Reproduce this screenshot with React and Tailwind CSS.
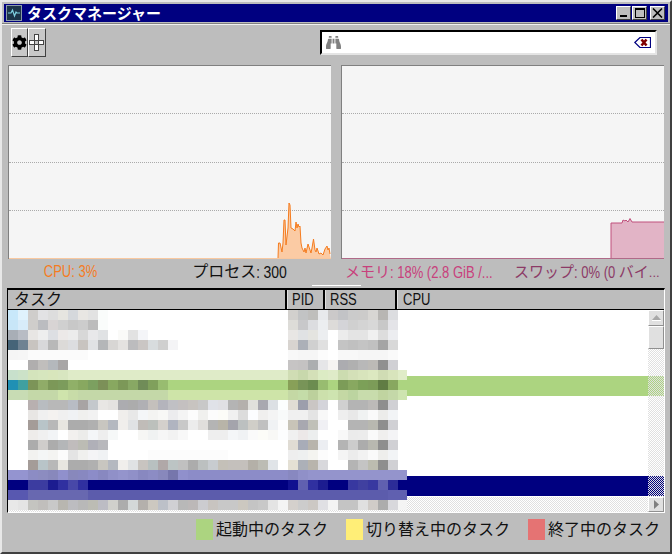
import { FaBinoculars, FaCog } from 'react-icons/fa';

const blur = [
  'c8e8fa e0f2fc cfcdcb e2e2e4 dddddd e6e5e0 d5d8dc e8e6e3 e2e2e2 fafcfb .*18 d2d0cd c2c3c4 bfbebc e8e9ec cbc9c9 c2c3c6 cbcbcb cccbca d8d6d3 b8b6b3 dcdde0 .',
  'c8e6f8 d8ecfa cfcdcb bbbcc0 d8d4d4 d0d0d0 c8c8c8 cccccc bcbcbc fafcfb .*18 dddcd8 c8c8ca dcdde0 eceef0 dddbd9 d4d4d8 d0d0d0 d4d4d4 d8d8d8 c8c8c8 e4e4e8 .',
  'a8aeb6 b8bcc4 e8e6e4 eeeeee dddfe3 ece9e8 ececec d8d8d8 e8e8ea e0e2e4 . fafaf8 e2e2e2 f4f5f8 .*14 e8e6e4 e0e2e4 e4e4e0 eceef0 . ececec e4e4e4 e4e4e4 f0f0f0 dddddd ecedf0 .',
  '456478 6e8292 c8c4c0 d8d8da b8b8b8 dcdad8 dcdde0 c8c4c0 e0e2e4 b4b6b8 d8d6d4 e4e2e0 bcbcbe cac6c4 d8dcde cfcfcf f4f4f6 .*11 d8d4d0 acb0b8 d0d0d0 e0e0e0 . c4c4c4 c0c0c0 c4c4c4 c0c0c0 a4a4a4 d8d8d8 .',
  'f5f5f5 f6f6f6 fbfbfb*6 .*20 f8f8f8 f6f6f6 f6f6f6 fcfcfc . f8f8f8 f8f8f8 f6f6f6 f6f6f6 f6f6f6 fafafa .',
  '. . b0aeae c0bebc b4b8bc a8a6a6 .*22 c6c4c4 c4c2c2 acaeb0 e6e6e8 f6f4f2 acacb0 b0b0b0 b8b8b8 bcbab6 909090 d0d0d4 .',
  'c8e0cc cce2c8 d4e4bc d6e6be d8e6bc d8e6c0 dfebc8*22 d0ddb4 c8d8ac d4e0b8 dcebc4 dfebc8 ccdcb0 d4e0b8 d8e4bc dce8c0 d0dcb4 d8e4bc e0ecc8',
  '2090b4 40a0a0 7c9458 90ac68 7c9858 7c9c5c 90b068 88a860 7ca060 7c9058 88a860 7c9858 88a864 708c58 80a05c 98bc70 acd480*12 88a058 789458 6c8c50 98bc70 acd480 7c9c58 88a860 7ca058 7c9c58 607c44 88a860 acd480',
  'c8dcb4 c8dcb4 c4d8a8*3 cfe4ac c8dca8 c4d8a8*9 cee4a8*12 c4d8a4 c4dca8 bcd09c cce0ac cee4b0 c4d8a4 bcd4a0 c8dcac c8dcac c0d4a0 c4d8a8 cee4b0',
  '. . b8b0b0 b8bcc0 b8b8b8 b8b8b8 b8bcc4 a8a4a4 c4c8cc e8e6e4 e4e2e0 acacb0 acacac b0b0b4 c4c0bc b4b4bc c0c0c4 c4c0c0 c8c4c0 c8c8c8 e0e2e8 e0e0e4 b4b4b4 b4b0ac e0e0dc a8a8b0 dce0e4 fcfefe e0dcd4 9c9eac cac6c4 d4d4da . d0d0d0 b4b4b4 b4b4b4 bcbab8 8e8e8e d0d0d4 .',
  '. . e8e6e4 f0f0f0 f4f2f0 f0f0f0 f0f2f4 f0f0ee f2f2f2 . . f0eeec e8e8e8 f4f6f8 f4f4f2 f8f8f6 ececee f4f4f4 fcfcfc f0f0ee fcfcfc fcfcf8 f0f0f0 dcdcdc fcfdff f0efee f4f4f4 f8fafa f0f0f0 f0f0f0 e4e4e4 f8f8f8 . eeeeee e8e8e8 f0f2f2 fafafa ececea f2f4f6 .',
  '. . a49c98 b8c4c8 b8b8b8 e8e6e0 acacac acacac b0b0b0 c8c6c0 b4b8c0 f0eeec e0e2e4 c0bcb8 bcc0bc d4d0cc b0b4c0 c8c8c8 ececec e0dedc b4b4b4 b8b4a8 a4a4ac bcc0c0 d0cec8 c0c0c0 f0f2f4 fcfcfc c8c4b8 a8a8b0 c0c0b8 f0f0f4 . . b4b4b4 b4b4b4 b8b8b0 8e8e8e d0d0d4 .',
  '. . eeecea f0f0f0 f2f4f6 . f2f0ee ececea f4f6f8 eeeeee f6f8f8 . . f6f6f4 f0f2f2 f6f6f6 f2f2f2 f8f8f8 . . eeeeee eeeeee f4f6f8 f0f2f4 fafafa fcfcf8 f8f8f6 fcfdfe f0f0f0 ece8e8 eceeee . . f8f8f8 ebebeb ececec fafafa f0efee f4f4f6 .',
  '. . acacac cfcdcb acacac b4b6b8 c0bcbc bcbcb4 b0b0b8 b8b8bc .*18 e0dcd4 a8acb8 b8b4ac eceef2 . b4b4b4 cccccc acacac b8b8b0 8e8e8e d0d0d4 .',
  '. . f2f2f0 f4f6f6 f4f4f2 fcfcfc e4e4e4 f0f0ee f4f4f6 f0f2f4 .*4 fcfcfc*8 .*6 eeeeee eef0f0 f4f4f0 fcfcfc . f4f4f4 ececec f2f2f2 fafafa eeeeec f2f4f6 .',
  '. . a49c98 b8c4c8 b8b8b8 e8e6e0 acacac acacac b0b0b0 c8c6c0 b4b8c0 f0eeec e0e2e4 c8c4c0 b8c0c0 b0a8a8 bcc4c4 c0c0c0 acacac bcc0c0 c8ccd0 c4c0b8 c4c0bc c4c0bc b4b0a8 bcbcb4 e0e4e8 . e4e0d4 acb0b8 b8b4ac d8d8dc . . b4b4b4 c4c4c4 bcbcb0 8e8e8e d0d0d4 .',
  '9494d0 9494d0 8c8cc4 8c8cc0 8888bc 9090cc 8888bc 8888c0 8c8cc8 8888c0 9090c8 9494cc 9090c8 8888c0 8c8cc4 8888bc 7676ac 9090cc 8c8cc8*10 8888c0 9090c8 9494cc*10',
  '000080 000080 3c3ca0 3c3ca0 1c1c90 3030a0 4848a8 3030a0 000080*20 101090 6060b0 3030a0 1c1c90 000080 000080 3838a0 4040a0 3838a0 6060b0 2c2c98 000080',
  '5858b0 5858b0 6868b0*6 5c5cac*30 6060b0 6060b0',
  'e8e8e8 e4e4e4 c4c4c0 c0bebc c8c8c8 b8b6b0 bcbcc0 b8b8b8 bcbcb4 bcbcc4 d0d0cc acacac d4d8d8 b4b0ac ccc8c0 bcc0c8 d0d0d4 b8b8b8 bcb8b8 ccccd0 c8c4c0 c8c8c8 c8c8c8 ccc8c0 c4c4c4 c8c8c8 e4e4e4 f4f4f4 d4d0cc cccccc ccc8c4 e0e0e4 f4f4f4 c4c4c4 c4c4c4 e0e0e0 d0ccc8 acacac d8d8dc f4f4f4',
];

const cells = (row) =>
  row.split(' ').flatMap((t) => {
    const [hex, n] = t.split('*');
    const color = hex === '.' ? '#ffffff' : `#${hex}`;
    return Array(Number(n || 1)).fill(color);
  });

const rows = ['', '', '', 'bg-[#acd480]', '', '', '', '', 'bg-[#000080]'];

const bevel = 'border border-t-white border-l-white border-r-[#404040] border-b-[#404040]';

// the latin glyphs in the reference are tall and narrow
function Tall({ children }) {
  return <span className="inline-block scale-y-[1.2] whitespace-pre">{children}</span>;
}

function Legend({ swatch, label }) {
  return (
    <div className="flex items-center gap-[3px]">
      <div className={`w-[17px] h-[21px] ${swatch}`} />
      <span className="text-[16px] leading-[21px] text-[#111]">{label}</span>
    </div>
  );
}

function Chart({ line, fill, base, points }) {
  return (
    <div className="relative w-[323px] h-[194px] bg-[#f5f5f5] border-t border-l border-[#808080]">
      <div className="absolute left-0 right-0 top-[47px] border-t border-dotted border-[#aaa]" />
      <div className="absolute left-0 right-0 top-[96px] border-t border-dotted border-[#aaa]" />
      <div className="absolute left-0 right-0 top-[144px] border-t border-dotted border-[#aaa]" />
      <svg className="absolute left-0 top-0" width="322" height="193" viewBox="0 0 322 193">
        <polygon points={`${points.split(' ')[0].split(',')[0]},193 ${points} 322,193`} fill={fill} />
        <polyline points={points} fill="none" stroke={line} strokeWidth="1" />
        <rect x="0" y="192" width="322" height="1" fill={base} />
      </svg>
    </div>
  );
}

export default function App() {
  return (
    <div className="w-[672px] h-[554px] overflow-hidden bg-[#bdbdbd] border-2 border-t-[#e8e8e8] border-l-[#e8e8e8] border-r-[#404040] border-b-[#404040] px-[2px] pt-[2px] font-['Liberation_Sans','Noto_Sans_CJK_JP',sans-serif]">
      <div className="h-[18px] bg-[#000080] flex items-center pl-[2px] pr-[3px]">
        <svg width="16" height="16" viewBox="0 0 16 16" className="shrink-0">
          <rect x="0.5" y="0.5" width="15" height="15" fill="#1c3448" stroke="#8a9aa8" />
          <path d="M2 8h3l1.500-3 2 6 1.500-4 1 1h3" fill="none" stroke="#7fd0e0" strokeWidth="1.200" />
        </svg>
        <span className="ml-[5px] text-white font-bold text-[15px] leading-none">タスクマネージャー</span>
        <div className="ml-auto flex">
          <button className={`w-[15px] h-[14px] bg-[#bdbdbd] ${bevel} flex items-end justify-center pb-[1px]`}>
            <span className="block w-[7px] h-[2px] mb-[1px] bg-black" />
          </button>
          <button className={`w-[15px] h-[14px] ml-[1px] bg-[#bdbdbd] ${bevel} flex items-center justify-center`}>
            <span className="block w-[10px] h-[10px] border border-t-2 border-black" />
          </button>
          <button className={`w-[15px] h-[14px] ml-[3px] bg-[#bdbdbd] ${bevel} flex items-center justify-center`}>
            <svg width="11" height="10" viewBox="0 0 11 10">
              <path d="M1 0.500l9 9M10 0.500l-9 9" stroke="#000" strokeWidth="1.600" />
            </svg>
          </button>
        </div>
      </div>
      <div className="mt-[1px] h-[2px] -mx-[2px] border-t border-t-[#808080] border-b border-b-[#f0f0f0]" />

      <div className="mt-[3px] h-[29px] flex pl-[7px] items-start">
        <button className={`w-[17px] h-[29px] bg-[#c8c8c8] ${bevel} flex items-center justify-center`}>
          <FaCog size={15} color="#000" />
        </button>
        <button className={`w-[18px] h-[29px] bg-[#c8c8c8] ${bevel} flex items-center justify-center`}>
          <svg width="16" height="17" viewBox="0 0 16 17">
            <g fill="#fff" stroke="#444" strokeWidth="1">
              <rect x="5.500" y="0.500" width="4" height="6" />
              <rect x="5.500" y="10.500" width="4" height="6" />
              <rect x="0.500" y="6.500" width="5" height="4" />
              <rect x="9.500" y="6.500" width="5" height="4" />
            </g>
          </svg>
        </button>
        <div className="ml-[274px] mt-[2px] w-[337px] h-[25px] bg-white border-2 border-t-black border-l-black border-r-[#e4e4e4] border-b-[#e4e4e4] flex items-center pl-[4px] pr-[4px]">
          <FaBinoculars size={15} color="#808080" />
          <svg className="ml-auto" width="17" height="11" viewBox="0 0 17 11">
            <path d="M0.800 5.500L6 0.500h10.500v10H6z" fill="#fff" stroke="#000080" strokeWidth="1.200" />
            <path d="M7.500 2.500l5 6M12.500 2.500l-5 6" stroke="#800000" strokeWidth="2.600" />
          </svg>
        </div>
      </div>

      <div className="mt-[8px] flex pl-[4px] gap-[10px]">
        <Chart
          line="#f57c1f"
          fill="#fbcba4"
          base="#f8c8a0"
          points="269,192 269.500,177 271,177 273,186 274,177 275,154 276,154 277,179 279,162 280,137 281,139 282,162 284,163 286,165 287,156 288,162 289,158 290,161 291,160 292,177 293,182 294,184 295,186 296,182 297,187 299,178 301,184 302,187 303,182 304.500,173 306,184 307,186 308,182 310,188 312,187 314,189 316,183 318,180 319,184 320,182 321,188"
        />
        <Chart
          line="#c0507c"
          fill="#e2b4c6"
          base="#b06a88"
          points="269,192 269,157 280,157 281,154 283,155 284,154 286,156 288,152.500 290,156 322,156"
        />
      </div>

      <div className="h-[26px] flex items-center text-[13px] pl-[4px]">
        <span className="w-[124px] pl-[1px] text-center text-[#f57c1f]"><Tall>CPU: 3%</Tall></span>
        <span className="w-[213px] pl-[2px] text-center text-[#111]">
          <span className="text-[16px]">プロセス</span><Tall>: </Tall><Tall><span className="text-[14px]">300</span></Tall>
        </span>
        <span className="w-[169px] text-[#c8407c] whitespace-nowrap">
          <span className="text-[15px]">メモリ</span><Tall>: 18% (2.8 GiB /...</Tall>
        </span>
        <span className="w-[150px] text-[#8c3a66] whitespace-nowrap overflow-hidden">
          <span className="text-[15px]">スワップ</span><Tall>: 0% (0 </Tall><span className="text-[15px]">バイ</span>...
        </span>
      </div>

      <div className="h-[3px] flex">
        <div className="ml-[308px] w-[49px] h-px bg-white" />
      </div>

      <div className="relative ml-[3px] w-[658px] h-[225px] border border-t-2 border-l-black border-t-black border-r-white border-b-white bg-white overflow-hidden">
        <div className="h-[20px] flex bg-[#bdbdbd] border-b border-black text-[13px] text-[#111] leading-[20px]">
          <div className="w-[279px] pl-[6px] text-[16px] border-r-2 border-black">タスク</div>
          <div className="w-[38px] pl-[4px] border-l border-l-[#e0e0e0] border-r-2 border-black"><Tall>PID</Tall></div>
          <div className="w-[72px] pl-[4px] border-l border-l-[#e0e0e0] border-r-2 border-black"><Tall>RSS</Tall></div>
          <div className="flex-1 pl-[5px] border-l border-l-[#e0e0e0]"><Tall>CPU</Tall></div>
        </div>

        <div className="h-[203px] pt-[6px] bg-white">
          {rows.map((bg, i) => (
            <div key={i} className={`h-[20px] ${bg}`} />
          ))}
        </div>

        <div className="absolute left-[640px] top-[20px] w-[16px] h-[187px] bg-[repeating-conic-gradient(#e0e0e0_0%_25%,transparent_0%_50%)] bg-[length:2px_2px]">
          <div className="h-[16px] bg-[#e0e0e0] border border-t-white border-l-white border-r-[#909090] border-b-[#909090] flex items-center justify-center">
            <svg width="9" height="6" viewBox="0 0 9 6">
              <path d="M4.500 0L9 5H0z" fill="#a8a8a8" />
              <path d="M0 5.500h9" stroke="#fff" />
            </svg>
          </div>
          <div className="h-[23px] bg-[#e0e0e0] border border-t-white border-l-white border-r-[#909090] border-b-[#909090]" />
        </div>

        <div className="absolute left-0 top-[207px] w-[656px] h-[15px] flex justify-end bg-[repeating-conic-gradient(#e0e0e0_0%_25%,#ffffff_0%_50%)] bg-[length:2px_2px]">
          <div className="w-[16px] h-[15px] bg-[#e0e0e0] border border-t-white border-l-white border-r-[#909090] border-b-[#909090] flex items-center justify-center">
            <svg width="6" height="9" viewBox="0 0 6 9">
              <path d="M6 4.500L1 9V0z" fill="#808080" />
            </svg>
          </div>
        </div>

        <div className="absolute left-0 top-[20px] w-[399px] overflow-hidden">
          {blur.map((row, r) => (
            <div key={r} className="flex h-[10px]">
              {cells(row).map((color, c) => (
                <div key={c} className="w-[10px] h-[10px] shrink-0" style={{ backgroundColor: color }} />
              ))}
            </div>
          ))}
        </div>
      </div>

      <div className="mt-[6px] flex justify-end gap-[18px] pr-[8px]">
        <Legend swatch="bg-[#acd480]" label="起動中のタスク" />
        <Legend swatch="bg-[#ffee77]" label="切り替え中のタスク" />
        <Legend swatch="bg-[#e57373]" label="終了中のタスク" />
      </div>
    </div>
  );
}
